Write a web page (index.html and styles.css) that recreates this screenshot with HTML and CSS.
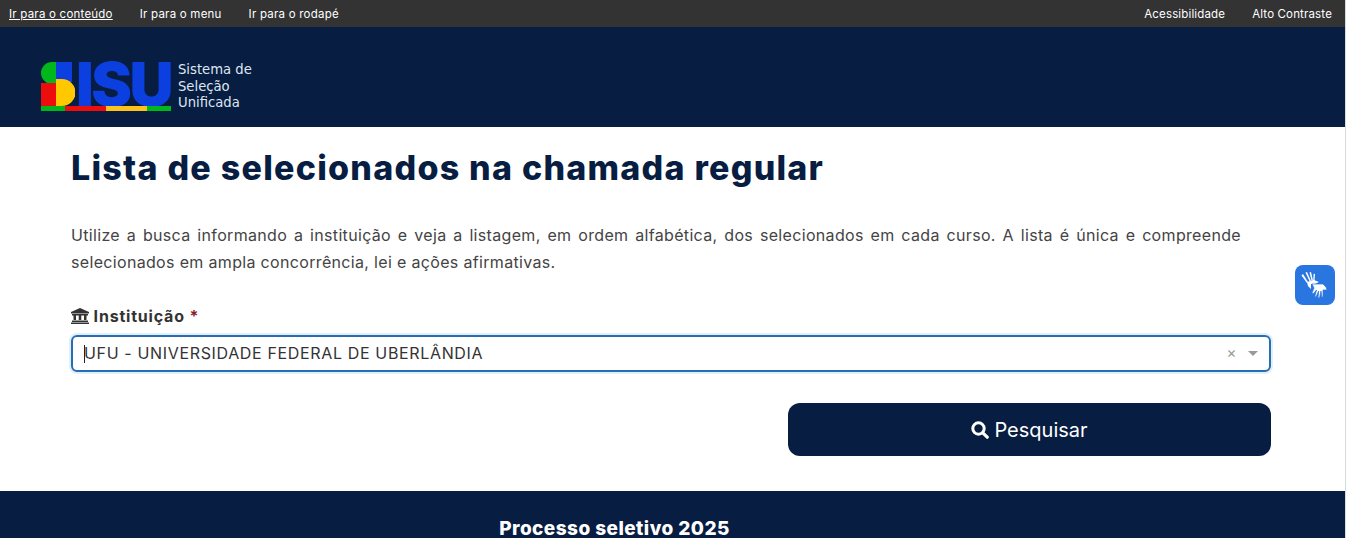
FILE: index.html
```html
<!DOCTYPE html>
<html lang="pt-BR">
<head>
  <meta charset="UTF-8" />
  <title>Sisu - Lista de selecionados</title>
  <link rel="stylesheet" href="styles.css">
</head>
<body>
  <nav class="skip-bar">
    <ul class="skip-links left">
      <li><a class="active" href="#conteudo">Ir para o conteúdo</a></li>
      <li><a href="#menu">Ir para o menu</a></li>
      <li><a href="#rodape">Ir para o rodapé</a></li>
    </ul>
    <ul class="skip-links right">
      <li><a href="#acessibilidade">Acessibilidade</a></li>
      <li><a href="#contraste">Alto Contraste</a></li>
    </ul>
  </nav>

  <header class="site-header">
    <div class="logo">
      <div class="logo-mark">
        <div class="logo-word">
          <svg class="logo-s" viewBox="0 0 34 44" width="34" height="44">
            <rect x="15" y="0" width="16" height="20" fill="#0b3fe0" />
            <path d="M15 0 H11 A11 11 0 0 0 11 22 H15 Z" fill="#00b81c" />
            <path d="M0 21 H15 V44 H0 Z" fill="#ee0d0d" />
            <path d="M15 17 H21 A13.5 13.5 0 0 1 21 44 H15 Z" fill="#ffc800" />
          </svg>
          <span class="logo-letters">ISU</span>
        </div>
        <div class="logo-strip">
          <span class="green"></span><span class="red"></span><span class="yellow"></span><span class="green"></span>
        </div>
      </div>
      <p class="logo-text">Sistema de<br>Seleção<br>Unificada</p>
    </div>
  </header>

  <main class="content" id="conteudo">
    <h1>Lista de selecionados na chamada regular</h1>
    <p class="intro">Utilize a busca informando a instituição e veja a listagem, em ordem alfabética, dos selecionados em cada curso. A lista é única e compreende selecionados em ampla concorrência, lei e ações afirmativas.</p>

    <label class="field-label" for="instituicao">
      <svg class="icon-bank" viewBox="0 0 18 16" width="18" height="16">
        <path d="M9 0 L18 4 V5.5 H0 V4 Z M1 6 H17 V7.5 H1 Z M2.5 7.5 H5 V12 H2.5 Z M7.75 7.5 H10.25 V12 H7.75 Z M13 7.5 H15.5 V12 H13 Z M1 12.5 H17 V14 H1 Z M0 14.5 H18 V16 H0 Z" fill="#333" />
      </svg>
      Instituição <span class="required">*</span>
    </label>
    <div class="select-box" id="instituicao">
      <span class="caret"></span>
      <span class="select-value">UFU - UNIVERSIDADE FEDERAL DE UBERLÂNDIA</span>
      <span class="select-clear">×</span>
      <span class="select-arrow"></span>
    </div>

    <div class="actions">
      <button class="search-button" type="button">
        <svg viewBox="0 0 18 18" width="18" height="18">
          <circle cx="7.5" cy="7.5" r="5.7" fill="none" stroke="#fff" stroke-width="3" />
          <path d="M11.8 11.8 L16.2 16.2" stroke="#fff" stroke-width="3.2" stroke-linecap="round" />
        </svg>
        Pesquisar
      </button>
    </div>
  </main>

  <footer class="site-footer" id="rodape">
    <h2>Processo seletivo 2025</h2>
  </footer>

  <button class="libras" type="button" aria-label="Libras">
    <svg viewBox="0 0 32 32" width="32" height="32">
      <g fill="#fff" stroke-linejoin="round">
        <path d="M4 5 L9 13 L8 14 L2.5 6.5 Z M8 3 L12 12 L10.7 12.6 L6.5 3.6 Z M12 3 L14 11.5 L12.6 12 L10.5 3.4 Z M16 5 L15.5 12 L14.2 12 L14.6 4.8 Z" />
        <path d="M8 13 L15 11 L20 13 L16 15 L12 15 L12 20 L9 17 Z" />
        <path d="M13 15 H24 L27 18 L28 21 L24 21 L24 28 L22.8 28 L22 22 L20.5 29 L19 29 L19.7 22 L17 28 L15.8 27.5 L17.5 21 L14 25 L13 24 L15 19 Z" stroke="#2a76e0" stroke-width="0.7" />
      </g>
    </svg>
  </button>
</body>
</html>
```

FILE: styles.css
```css
html, body {
  margin: 0;
  padding: 0;
  height: 538px;
  overflow: hidden;
}

body {
  font-family: 'Inter', 'Liberation Sans', sans-serif;
  background: #fff;
  color: #333;
  margin-right: 2px;
  border-right: 1px solid #d8d8e0;
  position: relative;
}

.skip-bar {
  background: #333;
  height: 27px;
  display: flex;
  justify-content: space-between;
  align-items: center;
  padding: 0 13px 0 9px;
  font-size: 11.5px;
  letter-spacing: 0.15px;
}

.skip-links {
  display: flex;
  gap: 27px;
  list-style: none;
  margin: 0;
  padding: 0;
}

.skip-links.left {
  letter-spacing: 0.22px;
}

.skip-links a {
  color: #fff;
  text-decoration: none;
}

.skip-links a.active {
  text-decoration: underline;
}

.site-header {
  background: #071d41;
  height: 100px;
  box-sizing: border-box;
  display: flex;
  align-items: flex-start;
  padding: 34px 0 0 41px;
}

.logo {
  display: flex;
  align-items: center;
  gap: 7px;
}

.logo-word {
  display: flex;
  height: 44px;
  align-items: center;
}

.logo-s {
  display: block;
}

.logo-letters {
  font-family: 'Inter', 'Liberation Sans', sans-serif;
  font-weight: 900;
  font-size: 61px;
  line-height: 44px;
  color: #0b3fe0;
  margin-left: 1px;
  letter-spacing: -2.5px;
}

.logo-strip {
  display: flex;
  height: 5px;
}

.logo-strip span {
  width: 41px;
}

.logo-strip .green { background: #00b81c; width: 24px; }
.logo-strip .red { background: #ee0d0d; }
.logo-strip .yellow { background: #ffc21a; }

.logo-text {
  margin: 1px 0 0;
  font-family: 'DejaVu Sans', sans-serif;
  font-size: 13.2px;
  line-height: 16.5px;
  color: #dfe6f2;
}

.content {
  padding: 0 74px 0 71px;
}

.content h1 {
  margin: 0;
  padding-top: 19px;
  font-size: 34px;
  line-height: 43px;
  font-weight: 800;
  letter-spacing: 1.25px;
  color: #071d41;
}

.intro {
  margin: 33px 0 0;
  max-width: 1170px;
  font-size: 16px;
  line-height: 27px;
  letter-spacing: 0.33px;
  text-align: justify;
  color: #444;
}

.field-label {
  display: block;
  margin-top: 30px;
  font-size: 16px;
  font-weight: 700;
  line-height: 20px;
  letter-spacing: 0.8px;
  color: #333;
}

.icon-bank {
  vertical-align: -2px;
}

.required {
  color: #8b1a2b;
}

.select-box {
  margin-top: 9px;
  height: 37px;
  box-sizing: border-box;
  border: 2px solid #2a6cb0;
  border-radius: 6px;
  box-shadow: 0 0 0 2px #dff0fb;
  display: flex;
  align-items: center;
  padding: 0 11px;
  font-size: 16px;
  letter-spacing: 0.65px;
  color: #333;
}

.caret {
  width: 1px;
  height: 18px;
  background: #222;
  margin-right: -1px;
}

.select-value {
  flex: 1;
  margin-top: -1px;
}

.select-clear {
  color: #999;
  font-size: 15px;
  margin: -3px 11px 0 0;
}

.select-arrow {
  width: 0;
  height: 0;
  border-left: 5px solid transparent;
  border-right: 5px solid transparent;
  border-top: 5px solid #999;
}

.actions {
  display: flex;
  justify-content: flex-end;
  margin-top: 31px;
}

.search-button {
  width: 483px;
  height: 53px;
  background: #071d41;
  color: #fff;
  border: none;
  border-radius: 12px;
  font-family: inherit;
  font-size: 20px;
  display: flex;
  align-items: center;
  justify-content: center;
  gap: 5px;
}

.site-footer {
  margin-top: 35px;
  background: #071d41;
  height: 47px;
  text-align: center;
  padding-right: 116px;
}

.site-footer h2 {
  margin: 0;
  padding-top: 26px;
  font-size: 19px;
  line-height: 23px;
  font-weight: 800;
  letter-spacing: 0.45px;
  color: #fff;
}

.libras {
  position: absolute;
  left: 1295px;
  top: 265px;
  width: 40px;
  height: 40px;
  border: none;
  border-radius: 8px;
  padding: 4px;
  background: #2a76e0;
}
```
